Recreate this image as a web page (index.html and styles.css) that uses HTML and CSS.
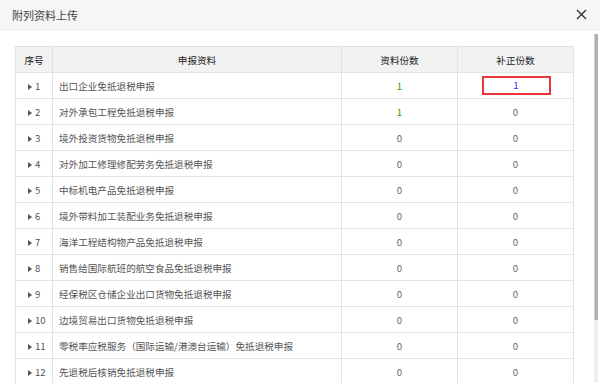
FILE: index.html
```html
<!DOCTYPE html>
<html>
  <head>
    <meta charset="utf-8" />
    <link rel="stylesheet" href="styles.css">
  </head>
  <body>
    <div class="dialog">
      <div class="dialog-head">
        <span class="dialog-title">附列资料上传</span>
        <span class="dialog-close">
          <svg width="11" height="11" viewBox="0 0 11 11"><path d="M1 1L10 10M10 1L1 10" stroke="#333" stroke-width="1.4" fill="none"/></svg>
        </span>
      </div>
      <div class="dialog-body">
        <table class="grid">
          <colgroup>
            <col class="c-no"><col class="c-name"><col class="c-num"><col class="c-num">
          </colgroup>
          <thead>
            <tr><th>序号</th><th>申报资料</th><th>资料份数</th><th>补正份数</th></tr>
          </thead>
          <tbody>
            <tr><td class="no"><i class="tri"></i>1</td><td class="name">出口企业免抵退税申报</td><td class="num green">1</td><td class="num"><span class="mark">1</span></td></tr>
            <tr><td class="no"><i class="tri"></i>2</td><td class="name">对外承包工程免抵退税申报</td><td class="num green">1</td><td class="num">0</td></tr>
            <tr><td class="no"><i class="tri"></i>3</td><td class="name">境外投资货物免抵退税申报</td><td class="num">0</td><td class="num">0</td></tr>
            <tr><td class="no"><i class="tri"></i>4</td><td class="name">对外加工修理修配劳务免抵退税申报</td><td class="num">0</td><td class="num">0</td></tr>
            <tr><td class="no"><i class="tri"></i>5</td><td class="name">中标机电产品免抵退税申报</td><td class="num">0</td><td class="num">0</td></tr>
            <tr><td class="no"><i class="tri"></i>6</td><td class="name">境外带料加工装配业务免抵退税申报</td><td class="num">0</td><td class="num">0</td></tr>
            <tr><td class="no"><i class="tri"></i>7</td><td class="name">海洋工程结构物产品免抵退税申报</td><td class="num">0</td><td class="num">0</td></tr>
            <tr><td class="no"><i class="tri"></i>8</td><td class="name">销售给国际航班的航空食品免抵退税申报</td><td class="num">0</td><td class="num">0</td></tr>
            <tr><td class="no"><i class="tri"></i>9</td><td class="name">经保税区仓储企业出口货物免抵退税申报</td><td class="num">0</td><td class="num">0</td></tr>
            <tr><td class="no"><i class="tri"></i>10</td><td class="name">边境贸易出口货物免抵退税申报</td><td class="num">0</td><td class="num">0</td></tr>
            <tr><td class="no"><i class="tri"></i>11</td><td class="name">零税率应税服务（国际运输/港澳台运输）免抵退税申报</td><td class="num">0</td><td class="num">0</td></tr>
            <tr><td class="no"><i class="tri"></i>12</td><td class="name">先退税后核销免抵退税申报</td><td class="num">0</td><td class="num">0</td></tr>
          </tbody>
        </table>
      </div>
      <div class="scrollbar"><div class="thumb"></div></div>
    </div>
  </body>
</html>
```
FILE: styles.css
```css
body {
  margin: 0;
  font-family: "Noto Sans CJK SC", "Liberation Sans", sans-serif;
  font-size: 9.6px;
  color: #333;
  background: #fff;
}
.dialog {
  position: relative;
  height: 383px;
  overflow: hidden;
}
.dialog-head {
  height: 29px;
  display: flex;
  align-items: center;
  justify-content: space-between;
  padding: 0 13px 0 12px;
  background: #f6f6f6;
  border-bottom: 1px solid #ebebeb;
}
.dialog-title {
  font-size: 11px;
  color: #444;
}
.dialog-close {
  display: flex;
  margin-top: -1px;
}
.dialog-body {
  padding: 16px 27px 0 15px;
}
.grid {
  width: 558px;
  border-collapse: collapse;
  table-layout: fixed;
}
.c-no { width: 37px; }
.c-name { width: 289px; }
.c-num { width: 116px; }
.grid th,
.grid td {
  border: 1px solid #e3e3e3;
  height: 25px;
  padding: 0;
  line-height: 12px;
  white-space: nowrap;
}
.grid th {
  background: #f2f2f2;
  font-weight: normal;
  color: #222;
}
.grid td.no {
  padding-left: 12px;
  color: #555;
}
.tri {
  display: inline-block;
  width: 0;
  height: 0;
  border-top: 3px solid transparent;
  border-bottom: 3px solid transparent;
  border-left: 4px solid #555;
  margin-right: 3px;
  vertical-align: 0;
}
.grid td.name {
  padding-left: 6px;
  color: #555;
}
.grid td.num {
  text-align: center;
  color: #666;
}
.grid td.num.green {
  color: #169b16;
}
.mark {
  display: inline-block;
  width: 65px;
  height: 15px;
  line-height: 15px;
  border: 2px solid #e8363b;
  color: #2b2bf0;
  margin-left: 1px;
}
.scrollbar {
  position: absolute;
  right: 2px;
  top: 34px;
  width: 4px;
  height: 360px;
  background: #efefef;
}
.thumb {
  height: 286px;
  background: #b0b0b0;
  border-left: 1px solid #d0d0d0;
}
```
